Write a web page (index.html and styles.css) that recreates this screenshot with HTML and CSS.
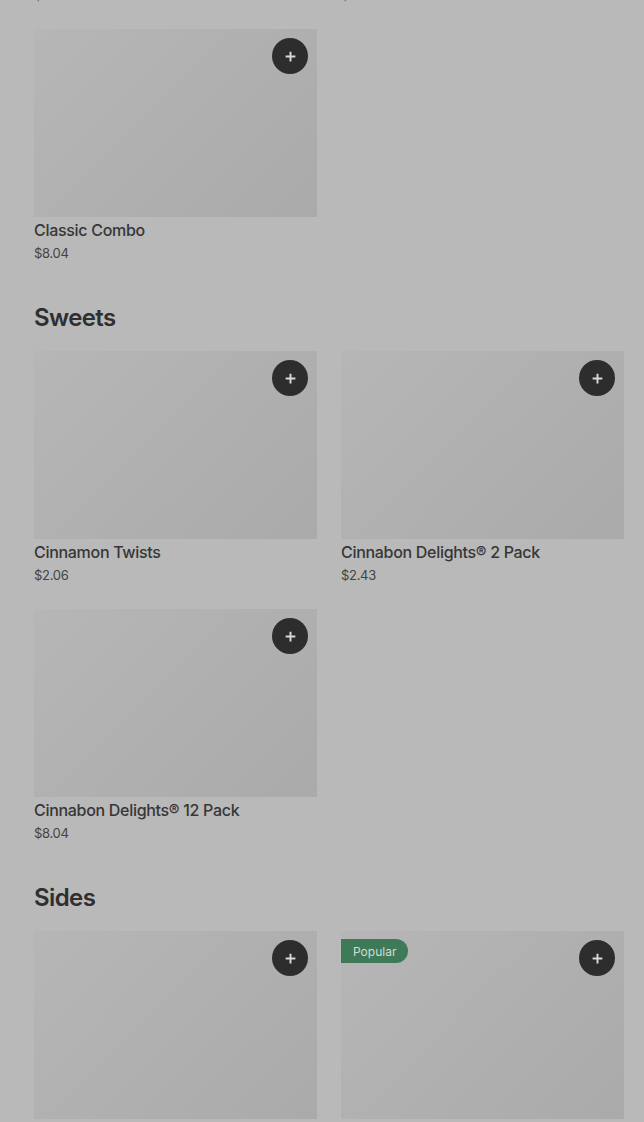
FILE: index.html
```html
<!DOCTYPE html>
<html>
<head>
<meta charset="utf-8">
<link rel="stylesheet" href="styles.css">
</head>
<body>
<main class="menu">
  <section class="section first">
    <div class="grid">
      <div class="card">
        <div class="thumb"><button class="add"><svg viewBox="0 0 16 16"><path d="M8 2v12M2 8h12" stroke="currentColor" stroke-width="2.4"/></svg></button></div>
        <div class="name">Cinnabon</div>
        <div class="price">$4.49</div>
      </div>
      <div class="card">
        <div class="thumb"><button class="add"><svg viewBox="0 0 16 16"><path d="M8 2v12M2 8h12" stroke="currentColor" stroke-width="2.4"/></svg></button></div>
        <div class="name">Combo</div>
        <div class="price">$8.49</div>
      </div>
      <div class="card">
        <div class="thumb"><button class="add"><svg viewBox="0 0 16 16"><path d="M8 2v12M2 8h12" stroke="currentColor" stroke-width="2.4"/></svg></button></div>
        <div class="name">Classic Combo</div>
        <div class="price">$8.04</div>
      </div>
    </div>
  </section>

  <section class="section">
    <h2 class="heading">Sweets</h2>
    <div class="grid">
      <div class="card">
        <div class="thumb"><button class="add"><svg viewBox="0 0 16 16"><path d="M8 2v12M2 8h12" stroke="currentColor" stroke-width="2.4"/></svg></button></div>
        <div class="name">Cinnamon Twists</div>
        <div class="price">$2.06</div>
      </div>
      <div class="card">
        <div class="thumb"><button class="add"><svg viewBox="0 0 16 16"><path d="M8 2v12M2 8h12" stroke="currentColor" stroke-width="2.4"/></svg></button></div>
        <div class="name">Cinnabon Delights® 2 Pack</div>
        <div class="price">$2.43</div>
      </div>
      <div class="card">
        <div class="thumb"><button class="add"><svg viewBox="0 0 16 16"><path d="M8 2v12M2 8h12" stroke="currentColor" stroke-width="2.4"/></svg></button></div>
        <div class="name">Cinnabon Delights® 12 Pack</div>
        <div class="price">$8.04</div>
      </div>
    </div>
  </section>

  <section class="section">
    <h2 class="heading">Sides</h2>
    <div class="grid">
      <div class="card">
        <div class="thumb"><button class="add"><svg viewBox="0 0 16 16"><path d="M8 2v12M2 8h12" stroke="currentColor" stroke-width="2.4"/></svg></button></div>
        <div class="name">Cheesy Fiesta Potatoes</div>
        <div class="price">$2.43</div>
      </div>
      <div class="card">
        <div class="thumb"><span class="badge">Popular</span><button class="add"><svg viewBox="0 0 16 16"><path d="M8 2v12M2 8h12" stroke="currentColor" stroke-width="2.4"/></svg></button></div>
        <div class="name">Chips and Nacho Cheese Sauce</div>
        <div class="price">$2.06</div>
      </div>
    </div>
  </section>
</main>
</body>
</html>
```

FILE: styles.css
```css
html, body {
  margin: 0;
  padding: 0;
  background: #b9b9b9;
  overflow: hidden;
}
body {
  font-family: Inter, "Noto Sans", sans-serif;
  color: #333;
}
.menu {
  padding: 0 20px 0 34px;
  margin-top: -229px;
}
.section {
  margin-top: 41px;
}
.section.first {
  margin-top: 0;
}
.heading {
  margin: 0 0 18px;
  font-size: 24px;
  line-height: 30px;
  font-weight: 600;
  color: #2f2f2f;
  letter-spacing: -0.6px;
}
.grid {
  display: grid;
  grid-template-columns: 283px 283px;
  column-gap: 24px;
  row-gap: 25px;
}
.card {
  display: flex;
  flex-direction: column;
}
.thumb {
  position: relative;
  height: 188px;
  background: linear-gradient(135deg, #b6b6b6 0%, #b0b0b0 50%, #aaaaaa 100%);
}
.add {
  position: absolute;
  top: 9px;
  right: 9px;
  width: 36px;
  height: 36px;
  border-radius: 50%;
  border: 0;
  padding: 0;
  background: #2d2d2d;
  color: #d8d8d8;
  display: flex;
  align-items: center;
  justify-content: center;
}
.add svg {
  width: 13px;
  height: 13px;
}
.badge {
  position: absolute;
  top: 8px;
  left: 0;
  height: 24px;
  padding: 0 12px;
  display: flex;
  align-items: center;
  background: #3e7a58;
  color: #d4dcd6;
  font-size: 12px;
  border-radius: 0 12px 12px 0;
}
.name {
  margin-top: 3px;
  font-size: 16px;
  line-height: 20px;
  font-weight: 500;
  color: #363636;
  letter-spacing: -0.3px;
}
.price {
  margin-top: 4px;
  font-size: 13px;
  line-height: 18px;
  color: #444;
  letter-spacing: -0.3px;
}
```
